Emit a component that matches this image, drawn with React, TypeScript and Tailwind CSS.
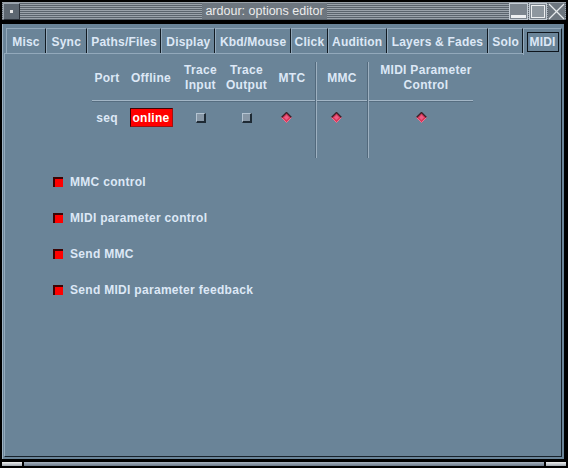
import React from 'react';

// tab strip of the options editor, widths taken from the original window
const tabs = [
  { label: 'Misc', w: 'w-[40px]' },
  { label: 'Sync', w: 'w-[41px]' },
  { label: 'Paths/Files', w: 'w-[75px]' },
  { label: 'Display', w: 'w-[54px]' },
  { label: 'Kbd/Mouse', w: 'w-[76px]' },
  { label: 'Click', w: 'w-[37px]' },
  { label: 'Audition', w: 'w-[59px]' },
  { label: 'Layers & Fades', w: 'w-[102px]' },
  { label: 'Solo', w: 'w-[35px]' },
];

const options = ['MMC control', 'MIDI parameter control', 'Send MMC', 'Send MIDI parameter feedback'];

function Diamond() {
  return (
    <svg width="11" height="11" viewBox="0 0 11 11" className="block">
      <polygon points="5.5,0.5 10.5,5.5 5.5,10.5 0.5,5.5" fill="#d8385a" />
      <polygon points="5.5,3 8,5.5 5.5,8 3,5.5" fill="#ec5c84" />
      <polyline points="0.5,5.5 5.5,0.5 10.5,5.5" fill="none" stroke="#3a2028" strokeWidth="1.4" />
      <polyline points="0.5,5.5 5.5,10.5 10.5,5.5" fill="none" stroke="#f07090" strokeWidth="1" />
    </svg>
  );
}

function SmallCheck() {
  return (
    <div className="w-[10px] h-[10px] bg-[#8797a6] border-t border-l border-[#b4c4d2] border-r-2 border-b-2 border-r-[#1e2a34] border-b-[#1e2a34]" />
  );
}

function Separator({ col }: { col: string }) {
  return (
    <div className={`${col} row-start-1 row-span-3 flex justify-center relative z-10`}>
      <div className="w-[2px] h-full border-l border-[#52697c] bg-[#9db0c0]" />
    </div>
  );
}

export default function App() {
  return (
    <div className="w-[568px] h-[468px] bg-black flex flex-col overflow-hidden font-['Liberation_Sans',Arial,sans-serif] select-none">
      {/* Title bar */}
      <div className="mt-[2px] mx-[2px] h-[18px] flex items-center bg-[repeating-linear-gradient(to_bottom,#9aa2aa_0px,#9aa2aa_1px,#5a636c_1px,#5a636c_2px)]">
        <div className="ml-[1px] w-[17px] h-[17px] flex items-center justify-center bg-[#5d6771] border-t border-l border-[#9aa4ae] border-r border-b border-r-[#2a3038] border-b-[#2a3038]">
          <div className="w-[3px] h-[3px] bg-[#e4e4e4]" />
        </div>
        <div className="flex-1 flex justify-center">
          <span className="px-[3px] bg-[#6d767f] text-[12.5px] leading-[16px] text-[#ececec]">ardour: options editor</span>
        </div>
        <div className="flex items-center mr-[1px]">
          <svg width="19" height="17" viewBox="0 0 19 17" className="block">
            <rect x="0.5" y="0.5" width="18" height="16" fill="#7c858e" stroke="#c4ccd4" />
            <rect x="2" y="12" width="15" height="3" fill="#eef0f2" />
          </svg>
          <svg width="18" height="17" viewBox="0 0 18 17" className="block ml-[1px]">
            <rect x="0.5" y="0.5" width="17" height="16" fill="#7c858e" stroke="#c4ccd4" />
            <rect x="2.5" y="2.5" width="13" height="12" fill="#8e979f" stroke="#eef0f2" />
          </svg>
          <svg width="17" height="17" viewBox="0 0 17 17" className="block ml-[1px]">
            <rect x="0" y="0" width="17" height="17" fill="#6d767f" />
            <line x1="1" y1="1" x2="16" y2="16" stroke="#e6e9ec" strokeWidth="1.2" />
            <line x1="16" y1="1" x2="1" y2="16" stroke="#e6e9ec" strokeWidth="1.2" />
          </svg>
        </div>
      </div>

      {/* Window body */}
      <div className="mt-[4px] ml-[2px] w-[562px] h-[435px] bg-[#6a8498] border-l border-[#9fb3c3] flex flex-col pl-[1px] pr-[2px] pb-[2px]">
        {/* Tabs */}
        <div className="mt-[4px] ml-[2px] flex items-end text-[12px] font-bold tracking-[0.2px] text-[#dde8f6]">
          {tabs.map((t) => (
            <div
              key={t.label}
              className={`${t.w} h-[25px] flex items-center justify-center pt-[2px] border-t border-l border-[#93a9bb] border-r border-r-[#111a22] whitespace-nowrap`}
            >
              {t.label}
            </div>
          ))}
          <div className="w-[39px] h-[27px] -mb-[2px] flex items-center justify-center pb-[1px] border-t border-l border-[#93a9bb] border-r border-r-[#111a22] bg-[#6a8498] relative z-10">
            <span className="px-[2px] leading-[18px] border border-[#0e151c]">MIDI</span>
          </div>
        </div>

        {/* Page */}
        <div className="flex-1 border-t border-l border-[#93a9bb] border-r border-b border-r-[#16212b] border-b-[#16212b] text-[12px] font-bold tracking-[0.3px] text-[#dde8f6]">
          {/* MIDI port table */}
          <div className="ml-[87px] mt-[8px] grid grid-cols-[30px_58px_41px_51px_40px_8px_44px_8px_108px] grid-rows-[38px_2px_56px]">
            <div className="col-start-1 row-start-1 flex items-center justify-center pb-[6px]">Port</div>
            <div className="col-start-2 row-start-1 flex items-center justify-center pb-[6px]">Offline</div>
            <div className="col-start-3 row-start-1 flex items-center justify-center text-center leading-[15px] pb-[6px]">Trace<br />Input</div>
            <div className="col-start-4 row-start-1 flex items-center justify-center text-center leading-[15px] pb-[6px]">Trace<br />Output</div>
            <div className="col-start-5 row-start-1 flex items-center justify-center pb-[6px]">MTC</div>
            <Separator col="col-start-6" />
            <div className="col-start-7 row-start-1 flex items-center justify-center pb-[6px]">MMC</div>
            <Separator col="col-start-8" />
            <div className="col-start-9 row-start-1 flex items-center justify-center text-center leading-[15px] pb-[6px] whitespace-nowrap">MIDI Parameter<br />Control</div>

            <div className="col-start-1 col-span-9 row-start-2 w-[381px] border-t border-[#a3b6c6] border-b border-b-[#566d80]" />

            <div className="col-start-1 row-start-3 pt-[6px]"><div className="h-[19px] flex items-center justify-center">seq</div></div>
            <div className="col-start-2 row-start-3 pt-[6px] flex justify-center">
              <div className="w-[43px] h-[19px] flex items-center justify-center bg-[#ff0000] text-white border-t border-l border-[#3a0606] border-r border-b border-r-[#a01010] border-b-[#a01010]">online</div>
            </div>
            <div className="col-start-3 row-start-3 pt-[6px]"><div className="h-[19px] flex items-center justify-center"><SmallCheck /></div></div>
            <div className="col-start-4 row-start-3 pt-[6px]"><div className="h-[19px] flex items-center justify-center"><SmallCheck /></div></div>
            <div className="col-start-5 row-start-3 pt-[6px]"><div className="h-[19px] flex items-center justify-center pr-[12px]"><Diamond /></div></div>
            <div className="col-start-7 row-start-3 pt-[6px]"><div className="h-[19px] flex items-center justify-center pr-[11px]"><Diamond /></div></div>
            <div className="col-start-9 row-start-3 pt-[6px]"><div className="h-[19px] flex items-center justify-center pr-[10px]"><Diamond /></div></div>
          </div>

          {/* Option toggles */}
          <div className="mt-[6px] pl-[48px] flex flex-col">
            {options.map((o) => (
              <div key={o} className="h-[36px] flex items-center gap-[7px]">
                <div className="w-[10px] h-[10px] bg-[#ff0000] border-t-2 border-l-2 border-[#3c0404]" />
                <span>{o}</span>
              </div>
            ))}
          </div>
        </div>
      </div>

      {/* Bottom resize frame */}
      <div className="mt-[3px] flex h-[4px] px-[2px] gap-[2px]">
        <div className="w-[20px] bg-[linear-gradient(to_bottom,#f0f0f0,#a0a8b0)]" />
        <div className="w-[520px] bg-[linear-gradient(to_bottom,#a8b4c0,#6a7888)]" />
        <div className="w-[20px] bg-[linear-gradient(to_bottom,#f0f0f0,#a0a8b0)]" />
      </div>
    </div>
  );
}
